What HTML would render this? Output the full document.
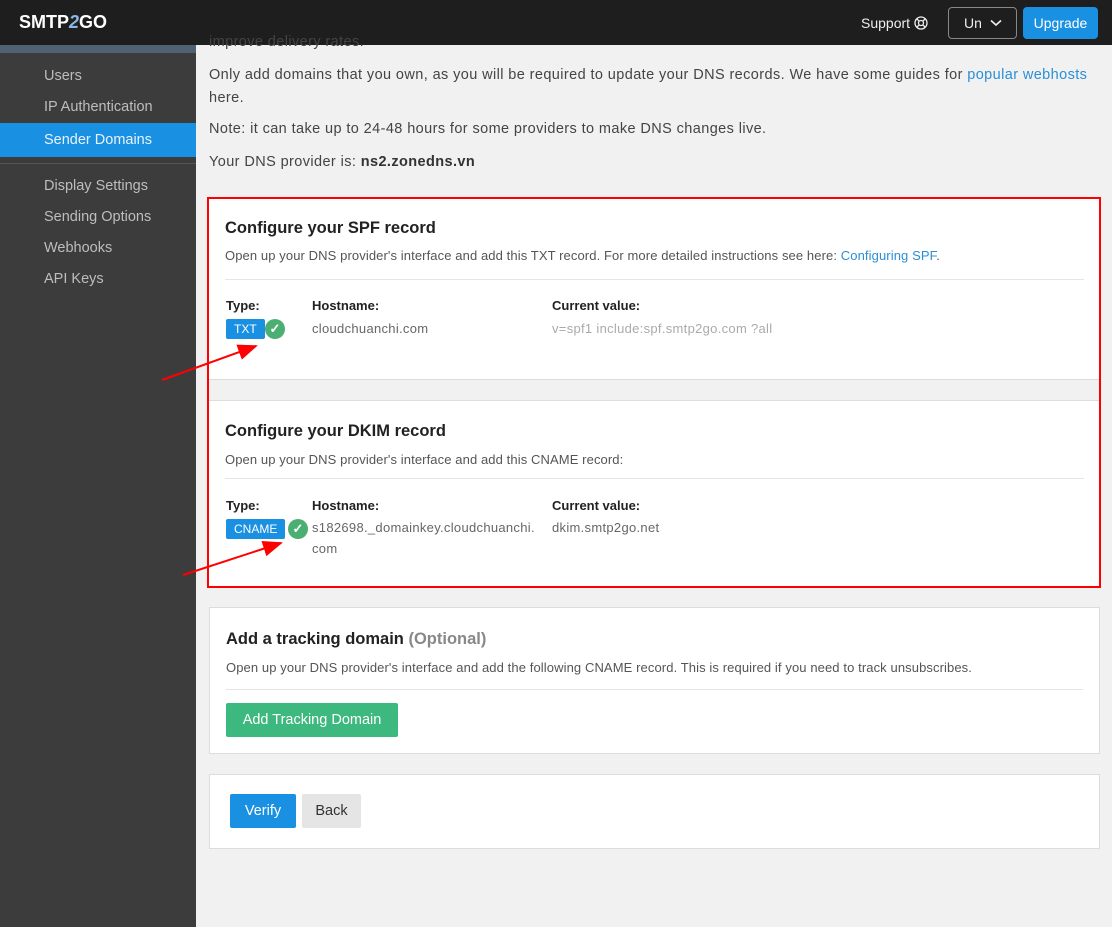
<!DOCTYPE html>
<html><head><meta charset="utf-8"><style>
*{box-sizing:border-box;margin:0;padding:0}
body{width:1112px;height:927px;overflow:hidden;background:#f1f1f1;font-family:"Liberation Sans",sans-serif;color:#444;position:relative}
.hdr{position:absolute;left:0;top:0;width:1112px;height:45px;background:#1e1e1e}
.logo{position:absolute;left:19px;top:12px;color:#fff;font-weight:bold;font-size:18px}
.side{position:absolute;left:0;top:45px;width:196px;height:882px;background:#3c3c3c}
.side .band{height:8px;background:#4f6173}
.side a{position:absolute;left:44px;color:#bdbdbd;font-size:14.5px}
.active{position:absolute;left:0;top:78px;width:196px;height:34px;background:#1a90e2}
.p{position:absolute;left:209px;font-size:14.5px;color:#444;letter-spacing:.4px}
.card{position:absolute;left:209px;width:891px;background:#fff;border:1px solid #ddd}
.card h3{position:absolute;left:16px;font-size:16.5px;color:#222;font-weight:bold}
.card .d{position:absolute;left:16px;font-size:13px;color:#555;letter-spacing:.1px}
.card hr{position:absolute;left:16px;right:16px;border:0;border-top:1px solid #e5e5e5}
.lbl{position:absolute;font-size:13px;font-weight:bold;color:#222}
.val{position:absolute;font-size:13px;color:#666;line-height:21px;letter-spacing:.3px}
.tag{position:absolute;background:#1a90e2;color:#fff;font-size:12px;height:20px;line-height:20px;padding:0 8px;border-radius:2px}
.ok{position:absolute;width:20px;height:20px;border-radius:50%;background:#4caf72;color:#fff;font-size:13px;text-align:center;line-height:20px;font-weight:bold}
a.l{color:#2b8fd6;text-decoration:none}
</style></head><body>
<div class="hdr">
<div class="logo">SMTP<span style="color:#8ab8e6;font-style:italic">2</span>GO</div>
<div style="position:absolute;left:861px;top:15px;color:#eee;font-size:14px">Support</div>
<svg style="position:absolute;left:914px;top:16px" width="14" height="14" viewBox="0 0 14 14" fill="none" stroke="#eee" stroke-width="1.3"><circle cx="7" cy="7" r="6"/><circle cx="7" cy="7" r="2.5"/><path d="M3 3L5.2 5.2M11 3L8.8 5.2M3 11L5.2 8.8M11 11L8.8 8.8"/></svg>
<div style="position:absolute;left:948px;top:7px;width:69px;height:32px;border:1px solid #888;border-radius:4px;color:#eee;font-size:14px;padding:7px 0 0 15px">Un</div>
<svg style="position:absolute;left:990px;top:19px" width="12" height="8" viewBox="0 0 12 8" fill="none" stroke="#eee" stroke-width="1.6"><path d="M1 1.5L6 6L11 1.5"/></svg>
<div style="position:absolute;left:1023px;top:7px;width:75px;height:32px;background:#1a90e2;border-radius:4px;color:#fff;font-size:14px;text-align:center;line-height:32px">Upgrade</div>
</div>
<div class="side"><div class="band"></div>
<div class="active"></div>
<a style="top:23px">Users</a>
<a style="top:54px">IP Authentication</a>
<a style="top:87px;color:#e8f2fb">Sender Domains</a>
<div style="position:absolute;left:0;top:118px;width:196px;border-top:1px solid #555"></div>
<a style="top:133px">Display Settings</a>
<a style="top:164px">Sending Options</a>
<a style="top:195px">Webhooks</a>
<a style="top:226px">API Keys</a>
</div>
<div class="p" style="top:34px">improve delivery rates.</div>
<div class="p" style="top:64px;width:890px;line-height:23px">Only add domains that you own, as you will be required to update your DNS records. We have some guides for <a class="l">popular webhosts</a> here.</div>
<div class="p" style="top:121px">Note: it can take up to 24-48 hours for some providers to make DNS changes live.</div>
<div class="p" style="top:154px">Your DNS provider is: <b style="color:#333">ns2.zonedns.vn</b></div>

<div class="card" style="top:198px;height:182px;border:0">
<h3 style="top:21px">Configure your SPF record</h3>
<div class="d" style="top:50px">Open up your DNS provider's interface and add this TXT record. For more detailed instructions see here: <a class="l">Configuring SPF</a>.</div>
<hr style="top:81px">
<div class="lbl" style="left:17px;top:100px">Type:</div>
<div class="lbl" style="left:103px;top:100px">Hostname:</div>
<div class="lbl" style="left:343px;top:100px">Current value:</div>
<div class="tag" style="left:17px;top:121px">TXT</div><div class="ok" style="left:56px;top:121px">&#10003;</div>
<div class="val" style="left:103px;top:120px">cloudchuanchi.com</div>
<div class="val" style="left:343px;top:120px;color:#aaa">v=spf1 include:spf.smtp2go.com ?all</div>
</div>
<div style="position:absolute;left:209px;top:379px;width:891px;height:22px;background:#f1f1f1;border-top:1px solid #ddd;border-bottom:1px solid #ddd"></div>
<div class="card" style="top:401px;height:185px;border:0">
<h3 style="top:21px">Configure your DKIM record</h3>
<div class="d" style="top:51px">Open up your DNS provider's interface and add this CNAME record:</div>
<hr style="top:77px">
<div class="lbl" style="left:17px;top:97px">Type:</div>
<div class="lbl" style="left:103px;top:97px">Hostname:</div>
<div class="lbl" style="left:343px;top:97px">Current value:</div>
<div class="tag" style="left:17px;top:118px">CNAME</div><div class="ok" style="left:79px;top:118px">&#10003;</div>
<div class="val" style="left:103px;top:116px;width:240px">s182698._domainkey.cloudchuanchi.<br>com</div>
<div class="val" style="left:343px;top:116px">dkim.smtp2go.net</div>
</div>
<div style="position:absolute;left:207px;top:197px;width:894px;height:391px;border:2px solid #f00"></div>

<div class="card" style="top:607px;height:147px">
<h3 style="top:22px">Add a tracking domain <span style="color:#888">(Optional)</span></h3>
<div class="d" style="top:52px">Open up your DNS provider's interface and add the following CNAME record. This is required if you need to track unsubscribes.</div>
<hr style="top:81px">
<div style="position:absolute;left:16px;top:95px;width:172px;height:34px;background:#3db87e;color:#fff;font-size:14.5px;text-align:center;line-height:34px;border-radius:2px">Add Tracking Domain</div>
</div>
<div class="card" style="top:774px;height:75px">
<div style="position:absolute;left:20px;top:19px;width:66px;height:34px;background:#1a90e2;color:#fff;font-size:14.5px;text-align:center;line-height:34px;border-radius:2px">Verify</div>
<div style="position:absolute;left:92px;top:19px;width:59px;height:34px;background:#e5e5e5;color:#333;font-size:14.5px;text-align:center;line-height:34px;border-radius:2px">Back</div>
</div>
<svg style="position:absolute;left:0;top:0" width="1112" height="927">
<defs><marker id="m" markerWidth="10" markerHeight="8" refX="9" refY="4" orient="auto"><path d="M0,0L10,4L0,8z" fill="#f00"/></marker></defs>
<line x1="162" y1="380" x2="256" y2="346" stroke="#f00" stroke-width="2" marker-end="url(#m)"/>
<line x1="183" y1="575" x2="281" y2="543" stroke="#f00" stroke-width="2" marker-end="url(#m)"/>
</svg>
</body></html>
